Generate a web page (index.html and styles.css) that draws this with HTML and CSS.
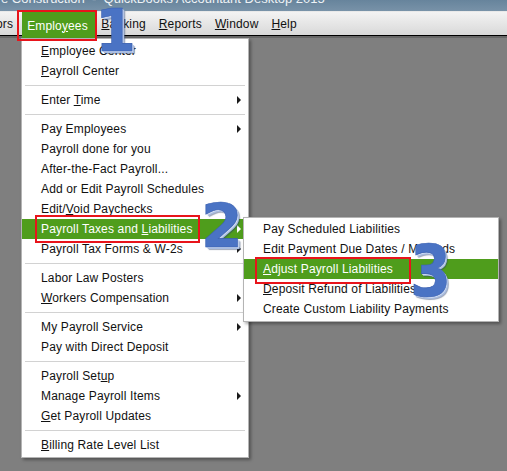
FILE: index.html
```html
<!DOCTYPE html>
<html>
<head>
<meta charset="utf-8">
<link rel="stylesheet" href="styles.css">
</head>
<body>
<div class="window">
  <div class="titlebar"><span class="title-text">e Construction&nbsp;&nbsp;-&nbsp;&nbsp;QuickBooks Accountant Desktop 2015</span></div>
  <nav class="menubar">
    <span class="mb-item mb-first">ors</span>
    <span class="mb-item mb-open">Emplo<u>y</u>ees</span>
    <span class="mb-item"><u>B</u>anking</span>
    <span class="mb-item"><u>R</u>eports</span>
    <span class="mb-item"><u>W</u>indow</span>
    <span class="mb-item"><u>H</u>elp</span>
  </nav>
  <div class="menubar-shadow"></div>
  <div class="workspace"></div>

  <div class="menu main-menu">
    <div class="mi"><span><u>E</u>mployee Center</span></div>
    <div class="mi"><span><u>P</u>ayroll Center</span></div>
    <div class="sep"></div>
    <div class="mi"><span>Enter <u>T</u>ime</span><i class="arrow"></i></div>
    <div class="sep"></div>
    <div class="mi"><span>Pay Employees</span><i class="arrow"></i></div>
    <div class="mi"><span>Payroll done for you</span></div>
    <div class="mi"><span>After-the-Fact Payroll...</span></div>
    <div class="mi"><span>Add or Edit Payroll Schedules</span></div>
    <div class="mi"><span>Edit/<u>V</u>oid Paychecks</span></div>
    <div class="mi active"><span>Payroll Taxes and <u>L</u>iabilities</span><i class="arrow"></i></div>
    <div class="mi"><span>Payroll Tax Forms &amp; W-2s</span><i class="arrow"></i></div>
    <div class="sep"></div>
    <div class="mi"><span>Labor Law Posters</span></div>
    <div class="mi"><span><u>W</u>orkers Compensation</span><i class="arrow"></i></div>
    <div class="sep"></div>
    <div class="mi"><span>My Payroll Service</span><i class="arrow"></i></div>
    <div class="mi"><span>Pay with Direct Deposit</span></div>
    <div class="sep"></div>
    <div class="mi"><span>Payroll Set<u>u</u>p</span></div>
    <div class="mi"><span>Manage Payroll Items</span><i class="arrow"></i></div>
    <div class="mi"><span><u>G</u>et Payroll Updates</span></div>
    <div class="sep"></div>
    <div class="mi"><span><u>B</u>illing Rate Level List</span></div>
  </div>

  <div class="menu sub-menu">
    <div class="mi"><span>Pay Scheduled Liabilities</span></div>
    <div class="mi"><span>Edit Payment Due Dates / Methods</span></div>
    <div class="mi active"><span><u>A</u>djust Payroll Liabilities</span></div>
    <div class="mi"><span><u>D</u>eposit Refund of Liabilities</span></div>
    <div class="mi"><span>Create Custom Liability Payments</span></div>
  </div>

  <div class="callout callout-1"></div>
  <div class="callout callout-2"></div>
  <div class="callout callout-3"></div>

  <span class="step step-1">1</span>
  <span class="step step-2">2</span>
  <span class="step step-3">3</span>
</div>
</body>
</html>
```

FILE: styles.css
```css
* { box-sizing: border-box; }

html, body {
  margin: 0;
  padding: 0;
}

body {
  width: 507px;
  height: 471px;
  overflow: hidden;
  background: #7f7f7f;
  font-family: "Liberation Sans", Arial, sans-serif;
  font-size: 12px;
  color: #111;
}

.window {
  position: relative;
  width: 507px;
  height: 471px;
  display: flex;
  flex-direction: column;
}

/* ---------- title bar ---------- */
.titlebar {
  height: 11px;
  overflow: hidden;
  background: linear-gradient(#67849c, #7892a8);
  color: #eef2f5;
  font-size: 13px;
  white-space: nowrap;
}

.title-text {
  display: block;
  line-height: 13px;
  margin-top: -8px;
  margin-left: 1px;
}

/* ---------- menu bar ---------- */
.menubar {
  height: 25px;
  display: flex;
  align-items: stretch;
  background: linear-gradient(#f3f3f3, #d9d9d9);
  border-top: 1px solid #e9e9e9;
  border-bottom: 1px solid #000;
  white-space: nowrap;
}

.mb-item {
  display: flex;
  align-items: center;
  padding: 1px 6.5px 0;
  letter-spacing: 0.15px;
  color: #111;
}

.mb-first {
  margin-left: -4px;
  padding: 1px 9px 0 0;
}

.mb-open {
  position: relative;
  z-index: 2;
  height: 27px;
  padding: 0 7px 0 5px;
  background: #4f9d1c;
  color: #fff;
}

.menubar-shadow {
  height: 2px;
  background: #686868;
}

.workspace {
  flex: 1;
  background: #7f7f7f;
}

/* ---------- drop-down menus ---------- */
.menu {
  position: absolute;
  background: #fff;
  border: 1px solid #b4b4b4;
  box-shadow: 2px 2px 3px rgba(0, 0, 0, 0.35);
  display: flex;
  flex-direction: column;
  z-index: 3;
}

.main-menu {
  left: 21px;
  top: 38px;
  width: 228px;
  padding: 2px 0;
}

.sub-menu {
  left: 243px;
  top: 217px;
  width: 256px;
  padding: 1px 0 2px;
  z-index: 4;
}

.mi {
  height: 20px;
  display: flex;
  align-items: center;
  justify-content: space-between;
  padding: 0 7px 0 19px;
  letter-spacing: 0.15px;
  white-space: nowrap;
  color: #111;
}

.mi.active {
  background: #4f9d1c;
  color: #fff;
}

.arrow {
  display: block;
  width: 0;
  height: 0;
  border-left: 4px solid #1a1a1a;
  border-top: 4px solid transparent;
  border-bottom: 4px solid transparent;
}

.mi.active .arrow {
  border-left-color: #fff;
}

.sep {
  height: 1px;
  margin: 4px 3px;
  background: #d2d2d2;
}

/* ---------- annotations ---------- */
.callout {
  position: absolute;
  border: 2px solid #e8141b;
  z-index: 6;
}

.callout-1 { left: 17px; top: 10px; width: 80px; height: 31px; }
.callout-2 { left: 35px; top: 215px; width: 165px; height: 28px; }
.callout-3 { left: 255px; top: 257px; width: 156px; height: 27px; }

.step {
  position: absolute;
  z-index: 7;
  font-family: "DejaVu Sans", sans-serif;
  font-weight: bold;
  line-height: 1;
  color: #4a73c4;
  -webkit-text-stroke: 0.6px #3a60b0;
  text-shadow: 1px 1px 0 #d3def2, 2px 2px 0 #a9bde2, 3px 3px 1px rgba(40, 60, 100, 0.45);
}

.step-1 { left: 95px; top: 1px; font-size: 59px; }
.step-2 { left: 201px; top: 196px; font-size: 60px; }
.step-3 {
  left: 410px;
  top: 235px;
  font-size: 72px;
  transform: scaleX(0.82);
  transform-origin: left top;
}
```
